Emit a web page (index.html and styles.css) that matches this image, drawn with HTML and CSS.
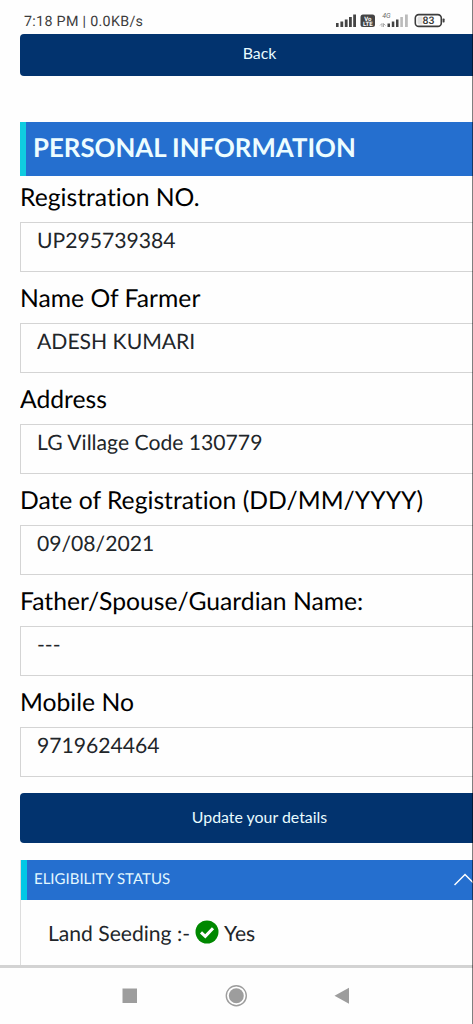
FILE: index.html
```html
<!DOCTYPE html>
<html lang="en">
<head>
<meta charset="utf-8">
<title>Personal Information</title>
<link rel="stylesheet" href="styles.css">
</head>
<body>
<div class="screen">
  <header class="status">
    <span class="clock">7:18 PM | 0.0KB/s</span>
    <svg class="indicators" width="112" height="20" viewBox="0 0 112 20">
      <g fill="#444">
        <rect x="1" y="13" width="2.6" height="4"/><rect x="5.4" y="11.5" width="2.8" height="5.500"/><rect x="9.800" y="9.500" width="2.800" height="7.500"/><rect x="14" y="7" width="2.800" height="10"/><rect x="18.200" y="4.500" width="2.800" height="12.500"/>
        <rect x="25.500" y="4.500" width="14.500" height="12.500" rx="2.500"/>
        <rect x="52.500" y="13.500" width="2.500" height="3.500"/><rect x="56.800" y="11.500" width="2.500" height="5.500"/><rect x="61" y="9.500" width="2.500" height="7.500"/>
      </g>
      <g fill="#bbb"><rect x="65.300" y="7" width="2.600" height="10"/><rect x="70" y="4.500" width="2.800" height="12.500"/></g>
      <text class="volte" x="32.800" y="10.500">Vo</text>
      <text class="volte" x="32.800" y="16">LTE</text>
      <text class="net" x="51.500" y="7.800">4G</text>
      <path d="M45 15.500l2-2v3.500M48.500 17v-3.500l2 2" fill="none" stroke="#aaa" stroke-width="1"/>
      <rect x="80.300" y="4.600" width="26" height="11.800" rx="3.500" fill="#fff" stroke="#3c3c3c" stroke-width="1.600"/>
      <path d="M84 6.500h3.500v8H84q-1.500 0-1.500-2v-4q0-2 1.500-2z" fill="#e3e3e3"/>
      <rect x="107.600" y="8.500" width="2" height="4" rx=".7" fill="#444"/>
      <text class="charge" x="93.500" y="14.400">83</text>
    </svg>
  </header>

  <main class="content">
    <button class="btn btn-back">Back</button>
    <h1 class="section-title">PERSONAL INFORMATION</h1>
    <div class="field"><div class="label">Registration NO.</div><div class="value">UP295739384</div></div>
    <div class="field"><div class="label">Name Of Farmer</div><div class="value">ADESH KUMARI</div></div>
    <div class="field"><div class="label">Address</div><div class="value">LG Village Code 130779</div></div>
    <div class="field"><div class="label">Date of Registration (DD/MM/YYYY)</div><div class="value">09/08/2021</div></div>
    <div class="field"><div class="label">Father/Spouse/Guardian Name:</div><div class="value">---</div></div>
    <div class="field"><div class="label">Mobile No</div><div class="value">9719624464</div></div>
    <button class="btn btn-update">Update your details</button>
    <section class="panel">
      <h2 class="panel-head"><span>ELIGIBILITY STATUS</span>
        <svg class="chevron" width="22" height="14" viewBox="0 0 22 14"><path d="M.500 13L11 2.500L21.500 13" fill="none" stroke="#fff" stroke-width="1.500"/></svg>
      </h2>
      <div class="panel-row">
        <span>Land Seeding :-</span>
        <svg class="check" width="24" height="24" viewBox="0 0 24 24"><circle cx="12" cy="12" r="11.500" fill="#080"/><path d="M6 12.400l4.300 4L18 8.200" fill="none" stroke="#fff" stroke-width="3"/></svg>
        <span>Yes</span>
      </div>
    </section>
  </main>

  <nav class="navbar">
    <svg width="16" height="32" viewBox="0 0 16 32"><rect x=".5" y="8.500" width="14.500" height="14.500" fill="#9d9d9d"/></svg>
    <svg width="24" height="32" viewBox="0 0 24 32"><circle cx="12.300" cy="15.700" r="10" fill="#fff" stroke="#9d9d9d" stroke-width="1.400"/><circle cx="12.300" cy="15.700" r="7.500" fill="#9d9d9d"/></svg>
    <svg width="16" height="32" viewBox="0 0 16 32"><path d="M.500 15.700L15 7.700v16z" fill="#9d9d9d"/></svg>
  </nav>
  <div class="edge"></div>
</div>
</body>
</html>
```
FILE: styles.css
```css
* { box-sizing: border-box; }
body { margin: 0; background: #fefefe; overflow: hidden; }
.screen { position: relative; width: 473px; height: 1024px; overflow: hidden; display: flex; flex-direction: column; font-family: Lato, sans-serif; font-variant-ligatures: none; text-rendering: geometricPrecision; color: #000; }
.status { height: 34px; flex: none; display: flex; justify-content: space-between; padding: 10px 26px 0 24px; font-family: Roboto, sans-serif; }
.clock { font-size: 14.3px; line-height: 24px; color: #3c3c3c; letter-spacing: .3px; white-space: nowrap; }
.indicators { flex: none; }
.volte { font: bold 6px Roboto, sans-serif; fill: #fff; text-anchor: middle; }
.net { font: italic 7px Roboto, sans-serif; fill: #666; text-anchor: middle; }
.charge { font: 500 10.500px Roboto, sans-serif; fill: #333; text-anchor: middle; }
.content { width: 480px; height: 931px; flex: none; margin-left: 20px; overflow: hidden; }
.btn { display: block; width: 480px; border: 0; padding: 0; border-radius: 4px; background: #02336e; color: #e9fcff; font-family: Lato, sans-serif; font-size: 15.9px; }
.btn-back { height: 42px; padding: 0 1px 5px 0; }
.btn-update { height: 50px; margin-top: 16px; padding: 0 1px 3px 0; }
.section-title { margin: 46px 0 0; height: 54px; border-left: 6px solid #10cce0; background: #256fcf; color: #edfdff; font-size: 25.8px; line-height: 52px; font-weight: 700; padding-left: 7px; white-space: nowrap; }
.field { height: 101px; white-space: nowrap; }
.section-title + .field { height: 96px; }
.section-title + .field .label { height: 46px; padding-top: 4px; }
.label { height: 51px; padding-top: 9px; font-size: 24.7px; line-height: 36px; }
.value { height: 50px; border: 1px solid #d4d4d4; padding: 3px 16px; font-size: 21.15px; line-height: 28px; color: #212529; }
.panel { margin-top: 17px; height: 110px; border-left: 1px solid #ddd; }
.panel-head { margin: 0; height: 40px; display: flex; justify-content: space-between; align-items: center; border-left: 6px solid #00c8e6; background: #256fcf; color: #e3f8ff; font-size: 15px; font-weight: 400; padding: 0 24px 3px 7px; }
.panel-row { display: flex; align-items: center; gap: 5px; padding: 19px 0 0 27px; font-size: 21.1px; line-height: 30px; color: #212529; white-space: nowrap; }
.check { position: relative; top: -2px; }
.navbar { height: 59px; flex: none; display: flex; align-items: flex-start; gap: 86px; padding: 12px 0 0 122px; border-top: 3px solid #d3d3d3; background: #fefefe; }
.edge { position: absolute; top: 0; right: 0; width: 1px; height: 1024px; background: rgba(0, 0, 0, .5); }
```
